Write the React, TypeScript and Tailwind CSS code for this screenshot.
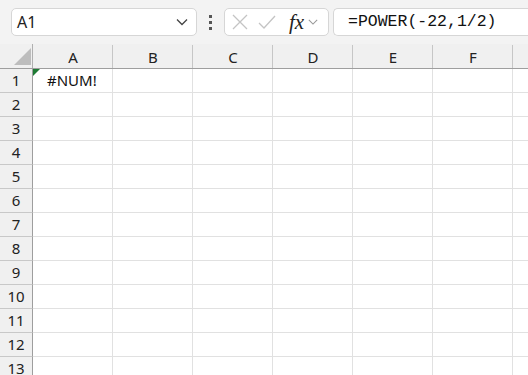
import React from "react";

const cols = ["A", "B", "C", "D", "E", "F", "G"];
const rows = Array.from({ length: 13 }, (_, i) => i + 1);

function Chevron({ className }: { className?: string }) {
  return (
    <svg width="12" height="8" viewBox="0 0 12 8" className={className}>
      <path d="M1 1.5 L6 6.5 L11 1.5" fill="none" stroke="currentColor" strokeWidth="1.3" />
    </svg>
  );
}

export default function App() {
  const font = { fontFamily: '"Noto Sans", "Open Sans", sans-serif' };
  return (
    <div className="w-[528px] h-[375px] overflow-hidden bg-white" style={font}>
      {/* toolbar */}
      <div className="h-[44px] bg-[#f3f3f3] flex items-center pl-[11px]">
        <div className="w-[186px] h-[28px] bg-white border border-[#d6d6d6] rounded-[5px] flex items-center justify-between pl-[5px] pr-[8px]">
          <span className="text-[16px] text-[#222] leading-none">A1</span>
          <Chevron className="text-[#444]" />
        </div>
        <div className="w-[27px] flex flex-col items-center gap-[3px]">
          <div className="w-[3px] h-[3px] bg-[#555]" />
          <div className="w-[3px] h-[3px] bg-[#555]" />
          <div className="w-[3px] h-[3px] bg-[#555]" />
        </div>
        <div className="w-[105px] h-[28px] bg-white border border-[#d6d6d6] rounded-[5px] flex items-center pl-[7px]">
          <svg width="16" height="16" viewBox="0 0 16 16">
            <path d="M1 1 L15 15 M15 1 L1 15" stroke="#c4c4c4" strokeWidth="1.3" fill="none" />
          </svg>
          <svg width="18" height="16" viewBox="0 0 18 16" className="ml-[10px]">
            <path d="M1 9 L6 14 L17 2" stroke="#c4c4c4" strokeWidth="1.3" fill="none" />
          </svg>
          <span
            className="ml-[13px] text-[21px] italic leading-none text-[#222]"
            style={{ fontFamily: '"Liberation Serif", serif' }}
          >
            fx
          </span>
          <Chevron className="ml-[4px] text-[#999] w-[10px]" />
        </div>
        <div className="ml-[4px] flex-1 h-[28px] bg-white border border-[#d6d6d6] border-r-0 rounded-l-[5px] flex items-center pl-[14px]">
          <span
            className="text-[16.5px] text-[#111] leading-none"
            style={{ fontFamily: '"Liberation Mono", monospace' }}
          >
            =POWER(-22,1/2)
          </span>
        </div>
      </div>

      {/* column headers */}
      <div className="flex h-[25px] bg-[#f0f0f0] border-b border-[#9e9e9e]">
        <div className="w-[33px] shrink-0 relative border-r border-[#b0b0b0]">
          <svg width="17" height="17" viewBox="0 0 17 17" className="absolute right-[1px] bottom-[3px]">
            <path d="M17 0 L17 17 L0 17 Z" fill="#bdbdbd" />
          </svg>
        </div>
        {cols.map((c) => (
          <div
            key={c}
            className="w-[80px] shrink-0 flex items-end justify-center pb-[1px] relative text-[15px] text-[#222]"
          >
            <span className="leading-[20px]">{c === "G" ? "" : c}</span>
            <div className="absolute right-0 top-[1px] bottom-0 w-px bg-[#c6c6c6]" />
          </div>
        ))}
      </div>

      {/* rows */}
      {rows.map((r) => (
        <div key={r} className="flex h-[24px]">
          <div className="w-[33px] shrink-0 bg-[#f0f0f0] border-r border-[#9e9e9e] border-b border-b-[#c8c8c8] flex items-center justify-center text-[15px] text-[#222]">
            {r}
          </div>
          {cols.map((c) => (
            <div
              key={c}
              className="w-[80px] shrink-0 border-r border-b border-[#e1e1e1] relative flex items-center text-[15px] text-[#111]"
            >
              {r === 1 && c === "A" && (
                <>
                  <svg width="7" height="7" viewBox="0 0 7 7" className="absolute left-0 top-0">
                    <path d="M0 0 L7 0 L0 7 Z" fill="#1e7b34" />
                  </svg>
                  <span className="pl-[14px]">#NUM!</span>
                </>
              )}
            </div>
          ))}
        </div>
      ))}
    </div>
  );
}
